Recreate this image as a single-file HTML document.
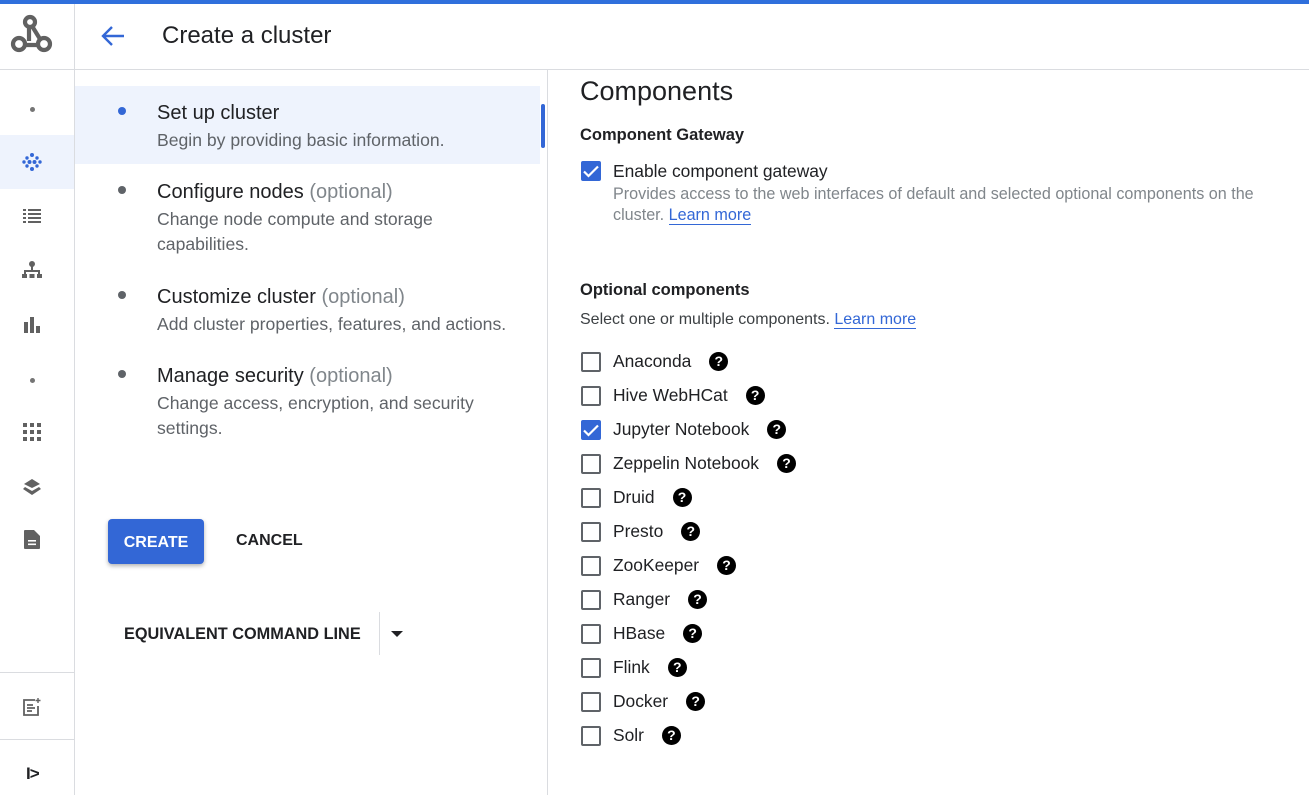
<!DOCTYPE html>
<html><head><style>
*{box-sizing:border-box;margin:0;padding:0}
body{width:1309px;height:795px;overflow:hidden;background:#fff;font-family:"Liberation Sans",sans-serif;color:#202124;position:relative}
.abs{position:absolute}
.topbar{left:0;top:0;width:1309px;height:4px;background:#2f6fdc}
.hline{height:1px;background:#dadce0}
.vline{width:1px;background:#dadce0}
.step .t{position:absolute;left:157px;font-size:20px;color:#202124}
.step .t span{color:#80868b}
.step .d{position:absolute;left:157px;font-size:17.6px;color:#5f6368;line-height:25px;width:360px}
.dot{position:absolute;left:118px;width:8px;height:8px;border-radius:50%;background:#5f6368}
.cb{position:absolute;left:581px;width:20px;height:20px;border:2px solid #5f6368;border-radius:2px}
.cb.on{background:#3367d6;border-color:#3367d6}
.lbl{position:absolute;left:613px;font-size:17.4px;color:#202124}
.q{display:inline-block;width:19px;height:19px;border-radius:50%;background:#000;color:#fff;font-size:14px;font-weight:bold;text-align:center;line-height:19px;margin-left:18px;vertical-align:1px}
a{color:#3367d6;text-decoration:none;border-bottom:1px solid #3367d6}
</style></head><body>
<div class="abs topbar"></div>
<div class="abs vline" style="left:74px;top:4px;height:791px"></div>
<div class="abs hline" style="left:0;top:69px;width:1309px"></div>
<div class="abs vline" style="left:547px;top:70px;height:725px"></div>
<div class="abs hline" style="left:0;top:672px;width:74px"></div>
<div class="abs hline" style="left:0;top:739px;width:74px"></div>
<svg class="abs" style="left:10px;top:14px" width="44" height="42" viewBox="0 0 44 42" fill="none" stroke="#616161" stroke-width="4.2"><circle cx="20" cy="8" r="5"/><circle cx="9" cy="30" r="6"/><circle cx="34" cy="30" r="6"/><path d="M19 13 L19 27 M22 12 L30 25 M15 31 L28 31"/></svg>
<div class="abs" style="left:0;top:135px;width:74px;height:54px;background:#eef3fd"></div>
<div class="abs" style="left:30px;top:107px;width:5px;height:5px;border-radius:50%;background:#757575"></div>
<svg class="abs" style="left:21px;top:151px" width="22" height="22" viewBox="0 0 22 22" fill="#3367d6"><circle cx="11" cy="4" r="2"/><circle cx="6" cy="7" r="1.7"/><circle cx="16" cy="7" r="1.7"/><circle cx="3" cy="11" r="1.7"/><circle cx="8.5" cy="11" r="2"/><circle cx="13.5" cy="11" r="2"/><circle cx="19" cy="11" r="1.7"/><circle cx="6" cy="15" r="1.7"/><circle cx="16" cy="15" r="1.7"/><circle cx="11" cy="18" r="2"/></svg>
<svg class="abs" style="left:22px;top:206px" width="20" height="20" viewBox="0 0 20 20" fill="#616161"><rect x="1" y="3" width="3" height="2"/><rect x="6" y="3" width="13" height="2"/><rect x="1" y="7" width="3" height="2"/><rect x="6" y="7" width="13" height="2"/><rect x="1" y="11" width="3" height="2"/><rect x="6" y="11" width="13" height="2"/><rect x="1" y="15" width="3" height="2"/><rect x="6" y="15" width="13" height="2"/></svg>
<svg class="abs" style="left:21px;top:260px" width="22" height="20" viewBox="0 0 22 20" fill="#616161"><circle cx="11" cy="4" r="3"/><rect x="10" y="6" width="2" height="6"/><rect x="3" y="10" width="16" height="2"/><rect x="3" y="10" width="2" height="4"/><rect x="17" y="10" width="2" height="4"/><rect x="1" y="14" width="5" height="4"/><rect x="8.5" y="14" width="5" height="4"/><rect x="16" y="14" width="5" height="4"/></svg>
<svg class="abs" style="left:23px;top:316px" width="18" height="18" viewBox="0 0 18 18" fill="#616161"><rect x="1" y="6" width="4" height="11"/><rect x="7" y="1" width="4" height="16"/><rect x="13" y="10" width="4" height="7"/></svg>
<div class="abs" style="left:30px;top:378px;width:5px;height:5px;border-radius:50%;background:#757575"></div>
<svg class="abs" style="left:23px;top:423px" width="18" height="18" viewBox="0 0 18 18" fill="#616161"><rect x="0" y="0" width="4" height="4"/><rect x="7" y="0" width="4" height="4"/><rect x="14" y="0" width="4" height="4"/><rect x="0" y="7" width="4" height="4"/><rect x="7" y="7" width="4" height="4"/><rect x="14" y="7" width="4" height="4"/><rect x="0" y="14" width="4" height="4"/><rect x="7" y="14" width="4" height="4"/><rect x="14" y="14" width="4" height="4"/></svg>
<svg class="abs" style="left:21px;top:477px" width="22" height="20" viewBox="0 0 22 20" fill="#616161"><path d="M11 2 L19 7 L11 11 L3 7Z"/><path d="M4 10 L11 14 L18 10 L20 12 L11 18 L2 12Z"/></svg>
<svg class="abs" style="left:23px;top:529px" width="18" height="21" viewBox="0 0 18 21" fill="#616161"><path d="M2 1 H11 L17 7 V19 Q17 20 16 20 H2 Q1 20 1 19 V2 Q1 1 2 1Z"/><rect x="5" y="11" width="8" height="1.6" fill="#fff"/><rect x="5" y="14.5" width="8" height="1.6" fill="#fff"/></svg>
<svg class="abs" style="left:22px;top:697px" width="20" height="20" viewBox="0 0 20 20" fill="none" stroke="#616161" stroke-width="1.8"><path d="M13 3 H2 V18 H16 V9"/><path d="M5 8 H11 M5 11 H13 M5 14 H10"/><path d="M16 1 V6 M13.5 3.5 H18.5" stroke-width="1.4"/></svg>
<div class="abs" style="left:26px;top:764px;font-size:17px;font-weight:bold;color:#202124;letter-spacing:-1px">I&gt;</div>
<svg class="abs" style="left:101px;top:25px" width="24" height="22" viewBox="0 0 24 22" fill="none" stroke="#3367d6" stroke-width="2.4"><path d="M23 11 H3 M11 2 L2 11 L11 20"/></svg>
<div class="abs" style="left:162px;top:22px;font-size:24px;color:#202124">Create a cluster</div>
<div class="abs" style="left:75px;top:86px;width:465px;height:78px;background:#eef3fd"></div>
<div class="abs" style="left:541px;top:104px;width:4px;height:44px;background:#3367d6;border-radius:2px"></div>
<div class="step">
<div class="dot" style="top:107px;background:#3367d6"></div>
<div class="t" style="top:102px">Set up cluster</div>
<div class="d" style="top:128px">Begin by providing basic information.</div>
<div class="dot" style="top:186px"></div>
<div class="t" style="top:181px">Configure nodes <span>(optional)</span></div>
<div class="d" style="top:207px">Change node compute and storage capabilities.</div>
<div class="dot" style="top:291px"></div>
<div class="t" style="top:286px">Customize cluster <span>(optional)</span></div>
<div class="d" style="top:312px">Add cluster properties, features, and actions.</div>
<div class="dot" style="top:370px"></div>
<div class="t" style="top:365px">Manage security <span>(optional)</span></div>
<div class="d" style="top:391px">Change access, encryption, and security settings.</div>
</div>
<div class="abs" style="left:108px;top:519px;width:96px;height:45px;background:#3367d6;border-radius:4px;box-shadow:0 2px 4px rgba(0,0,0,.3);color:#fff;font-size:16px;font-weight:bold;text-align:center;line-height:47px">CREATE</div>
<div class="abs" style="left:236px;top:532px;font-size:16px;font-weight:bold;color:#202124">CANCEL</div>
<div class="abs" style="left:124px;top:625px;font-size:16.3px;font-weight:bold;color:#202124">EQUIVALENT COMMAND LINE</div>
<div class="abs vline" style="left:379px;top:612px;height:43px"></div>
<div class="abs" style="left:391px;top:631px;width:0;height:0;border-left:6px solid transparent;border-right:6px solid transparent;border-top:6px solid #202124"></div>
<div class="abs" style="left:580px;top:76px;font-size:27px;color:#202124">Components</div>
<div class="abs" style="left:580px;top:126px;font-size:16.5px;font-weight:bold;color:#202124">Component Gateway</div>
<div class="cb on" style="top:161px"></div>
<svg class="abs" style="left:583px;top:165px" width="16" height="13" viewBox="0 0 16 13" fill="none" stroke="#fff" stroke-width="2.2"><path d="M1 6.5 L5.5 11 L15 1.5"/></svg>
<div class="lbl" style="top:161px">Enable component gateway</div>
<div class="abs" style="left:613px;top:184px;font-size:16.15px;color:#80868b;line-height:21px;width:670px">Provides access to the web interfaces of default and selected optional components on the cluster. <a>Learn more</a></div>
<div class="abs" style="left:580px;top:281px;font-size:16.5px;font-weight:bold;color:#202124">Optional components</div>
<div class="abs" style="left:580px;top:311px;font-size:16px;color:#3c4043">Select one or multiple components. <a>Learn more</a></div>
<div class="cb" style="top:352px"></div><div class="lbl" style="top:351px">Anaconda<span class="q">?</span></div>
<div class="cb" style="top:386px"></div><div class="lbl" style="top:385px">Hive WebHCat<span class="q">?</span></div>
<div class="cb on" style="top:420px"></div><svg class="abs" style="left:583px;top:424px" width="16" height="13" viewBox="0 0 16 13" fill="none" stroke="#fff" stroke-width="2.2"><path d="M1 6.5 L5.5 11 L15 1.5"/></svg><div class="lbl" style="top:419px">Jupyter Notebook<span class="q">?</span></div>
<div class="cb" style="top:454px"></div><div class="lbl" style="top:453px">Zeppelin Notebook<span class="q">?</span></div>
<div class="cb" style="top:488px"></div><div class="lbl" style="top:487px">Druid<span class="q">?</span></div>
<div class="cb" style="top:522px"></div><div class="lbl" style="top:521px">Presto<span class="q">?</span></div>
<div class="cb" style="top:556px"></div><div class="lbl" style="top:555px">ZooKeeper<span class="q">?</span></div>
<div class="cb" style="top:590px"></div><div class="lbl" style="top:589px">Ranger<span class="q">?</span></div>
<div class="cb" style="top:624px"></div><div class="lbl" style="top:623px">HBase<span class="q">?</span></div>
<div class="cb" style="top:658px"></div><div class="lbl" style="top:657px">Flink<span class="q">?</span></div>
<div class="cb" style="top:692px"></div><div class="lbl" style="top:691px">Docker<span class="q">?</span></div>
<div class="cb" style="top:726px"></div><div class="lbl" style="top:725px">Solr<span class="q">?</span></div>
</body></html>
